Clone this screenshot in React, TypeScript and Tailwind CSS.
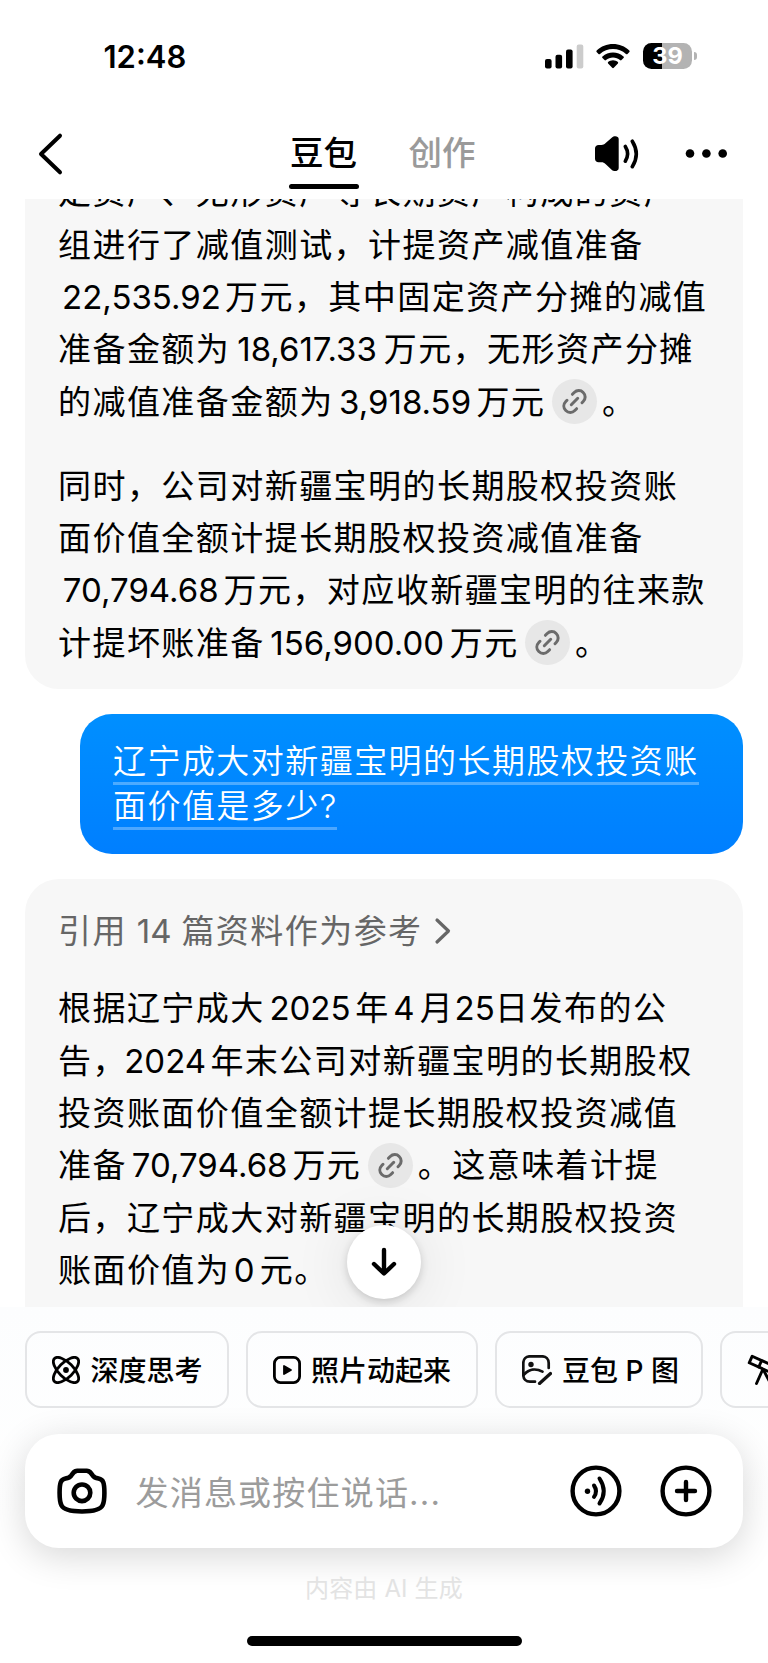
import type { ReactNode } from "react";

function Num({ children, className }: { children: ReactNode; className: string }) {
  return <span className={`inline-block text-center ${className}`}>{children}</span>;
}

function Line({ children }: { children: ReactNode }) {
  return <div className="flex h-[52.3px] items-center whitespace-nowrap">{children}</div>;
}

function LinkBadge() {
  return (
    <span className="-mt-[2px] mr-[5px] ml-[6.5px] flex size-[45px] items-center justify-center rounded-full bg-[#e7e7e7]">
      <svg width="25" height="25" viewBox="0 0 25 25" fill="none" stroke="#6b6b6b" strokeWidth="3" strokeLinecap="round">
        <path d="M9.3 15.700l6.400-6.400" />
        <path d="M10.400 5.300l1.800-1.800c2.600-2.600 6.600-2.600 9 0c2.600 2.600 2.600 6.400 0 9l-1.200 1.200" />
        <path d="M5 11.300l-1.200 1.200c-2.600 2.600-2.600 6.400 0 9c2.600 2.600 6.400 2.600 9 0l1.800-1.800" />
      </svg>
    </span>
  );
}

function StatusBar() {
  return (
    <div className="flex h-[108px] items-start">
      <div className="ml-[103.5px] mt-[41px] w-[84px] text-[31px] font-semibold leading-[32px]">12:48</div>
      <div className="ml-[357.5px] mt-[43px] flex">
        <svg width="39" height="27" viewBox="0 0 39 27">
          <rect x="0" y="16" width="6.6" height="9.4" rx="2" />
          <rect x="10.5" y="11.7" width="6.6" height="13.7" rx="2" />
          <rect x="21" y="6.5" width="6.6" height="18.9" rx="2" />
          <rect x="31.7" y="1.5" width="6.6" height="23.9" rx="2" fill="#cccccc" />
        </svg>
        <svg className="ml-[12px]" width="34" height="27" viewBox="0 0 34 27">
          <path d="M17 1c6.200 0 11.900 2.400 16.300 6.400c.5.5.5 1.100.1 1.600l-1.900 2c-.4.4-1 .4-1.500 0C26.400 7.800 21.900 6 17 6S7.600 7.800 4 11c-.5.4-1.100.4-1.500 0L.6 9c-.4-.5-.4-1.100.1-1.600C5.100 3.400 10.800 1 17 1z" />
          <path d="M17 9.400c4 0 7.700 1.500 10.500 4.100c.5.4.5 1.100 0 1.500l-2 2.100c-.4.4-1 .4-1.500 0c-1.900-1.700-4.300-2.700-7-2.700s-5.100 1-7 2.700c-.5.4-1.100.4-1.500 0l-2-2.100c-.5-.4-.5-1.100 0-1.500C9.300 10.900 13 9.400 17 9.400z" />
          <path d="M17 17.200c1.900 0 3.600.7 4.900 1.800c.4.4.4 1 0 1.400l-4.100 4.400c-.5.5-1.100.5-1.600 0l-4.100-4.400c-.4-.4-.4-1 0-1.400c1.300-1.100 3-1.800 4.900-1.800z" />
        </svg>
        <div className="ml-[13px] flex h-[26px] w-[49px] items-center justify-center rounded-[8.5px] bg-linear-to-r from-black from-[39%] to-[#b3b3b3] to-[39%] text-[23.5px] font-bold leading-none text-white">
          39
        </div>
        <div className="ml-[1.5px] mt-[9px] h-[8px] w-[3px] rounded-r-full bg-[#b3b3b3]" />
      </div>
    </div>
  );
}

function NavBar() {
  return (
    <div className="flex h-[91px] items-start text-[33.5px] font-medium leading-[40px]">
      <svg className="ml-[36px] mt-[24px]" width="30" height="44" viewBox="0 0 30 44" fill="none" stroke="#000" strokeWidth="4" strokeLinecap="round" strokeLinejoin="round">
        <path d="M24 3.700L5 22l19 18.300" />
      </svg>
      <div className="ml-[222.5px] mt-[25px] flex w-[71px] flex-col items-center">
        <span className="-ml-[1px] whitespace-nowrap">豆包</span>
        <span className="mt-[11px] h-[4.5px] w-[70px] rounded-full bg-black" />
      </div>
      <span className="ml-[49px] mt-[25px] whitespace-nowrap text-[#9a9a9a]">创作</span>
      <svg className="ml-[117px] mt-[27px]" width="46" height="38" viewBox="0 0 46 38">
        <path d="M2 13.500c0-2.200 1.500-3.600 3.600-3.600h2.900c1.600 0 2.800-.6 3.900-1.700L19 2.400c1.800-1.800 6.700-1.800 6.700 1.600v29c0 3.600-4.900 3.800-6.800 2l-6.400-6c-1.200-1.100-2.400-1.700-4-1.700H5.600c-2.100 0-3.600-1.400-3.600-3.600z" />
        <g fill="none" stroke="#000" strokeWidth="3.600" strokeLinecap="round">
          <path d="M32.300 11.500q4.600 7.200 0 14.700" />
          <path d="M39.300 6.200q8 12.800 0 25.500" />
        </g>
      </svg>
      <svg className="ml-[46.5px] mt-[40px]" width="42" height="12" viewBox="0 0 42 12">
        <circle cx="5" cy="5.500" r="4.300" />
        <circle cx="21.400" cy="5.500" r="4.300" />
        <circle cx="37.700" cy="5.500" r="4.300" />
      </svg>
    </div>
  );
}

function Chip({ icon, label, className }: { icon: ReactNode; label: string; className: string }) {
  return (
    <div className={`flex h-[77px] shrink-0 items-center gap-[10.5px] rounded-[16px] border-2 border-[#e4e5e7] pl-[25px] text-[28px] font-medium whitespace-nowrap ${className}`}>
      {icon}
      <span className="mt-[2px]">{label}</span>
    </div>
  );
}

const atomIcon = (
  <svg width="28" height="28" viewBox="0 0 28 28" fill="none" stroke="#000" strokeWidth="2.800">
    <ellipse cx="14" cy="14" rx="16.300" ry="7.300" transform="rotate(45 14 14)" />
    <ellipse cx="14" cy="14" rx="16.300" ry="7.300" transform="rotate(-45 14 14)" />
    <circle cx="14" cy="14" r="2.900" fill="#000" stroke="none" />
  </svg>
);

const playIcon = (
  <svg width="28" height="28" viewBox="0 0 28 28" fill="none" stroke="#000" strokeWidth="2.800">
    <rect x="1.400" y="1.400" width="25.200" height="25.200" rx="6" />
    <path d="M11 10v8l7-4z" fill="#000" strokeWidth="1.800" strokeLinejoin="round" />
  </svg>
);

const pictureIcon = (
  <svg width="30" height="30" viewBox="0 0 30 30" fill="none" stroke="#111" strokeWidth="2.700" strokeLinecap="round">
    <path d="M26.700 13V8c0-4-2.700-6.700-6.700-6.700H8c-4 0-6.700 2.700-6.700 6.700v12c0 4 2.700 6.700 6.700 6.700h5" />
    <path d="M2 19.500c5-5.500 12-6.500 18.500-2.800" />
    <circle cx="9" cy="9.500" r="2.700" fill="#111" stroke="none" />
    <path d="M17.500 28.500l11-10" strokeWidth="3.200" />
  </svg>
);

const telescopeIcon = (
  <svg width="32" height="32" viewBox="0 0 32 32" fill="none" stroke="#000" strokeWidth="2.900" strokeLinecap="round" strokeLinejoin="round">
    <path d="M5.200 2.200l24 11-2.700 6.500L2.200 8.800z" />
    <path d="M14.500 6.700l-2.700 6.300M15.500 16l-6 13.500M16.500 16l7 13.500" />
  </svg>
);

export default function App() {
  return (
    <div className="flex h-[1663px] w-[768px] flex-col overflow-hidden bg-white font-['Inter','Noto_Sans_CJK_SC',sans-serif] text-black">
      <StatusBar />
      <NavBar />

      {/* Conversation */}
      <div className="relative h-[1107.5px] overflow-hidden px-[25px] text-[33px] tracking-[1.45px]">
        <div className="-mt-[60px] h-[550px] rounded-[34px] bg-[#f7f7f7] px-[33px] pt-[28px]">
          <Line>定资产、无形资产等长期资产构成的资产</Line>
          <Line>组进行了减值测试，计提资产减值准备</Line>
          <Line><Num className="w-[167px] tracking-[0px]">22,535.92</Num>万元，其中固定资产分摊的减值</Line>
          <Line>准备金额为<Num className="w-[153.5px] tracking-[0px]">18,617.33</Num>万元，无形资产分摊</Line>
          <Line>的减值准备金额为<Num className="w-[143px] tracking-[0px]">3,918.59</Num>万元<LinkBadge />。</Line>
          <div className="mt-[32px]">
            <Line>同时，公司对新疆宝明的长期股权投资账</Line>
            <Line>面价值全额计提长期股权投资减值准备</Line>
            <Line><Num className="w-[165.5px] tracking-[0px]">70,794.68</Num>万元，对应收新疆宝明的往来款</Line>
            <Line>计提坏账准备<Num className="w-[185px] tracking-[0px]">156,900.00</Num>万元<LinkBadge />。</Line>
          </div>
        </div>

        <div className="ml-[55px] mt-[25px] h-[140px] rounded-[32px] bg-linear-to-b from-[#008fff] to-[#007fff] pl-[33px] pt-[23px] leading-[49px] text-white">
          <div className="h-[45px] font-[350]"><span className="inline-block h-[48px] w-[586px] whitespace-nowrap border-b-[3px] border-white/30">辽宁成大对新疆宝明的长期股权投资账</span></div>
          <div className="h-[45px] font-[350]"><span className="inline-block h-[48px] w-[224px] whitespace-nowrap border-b-[3px] border-white/30">面价值是多少?</span></div>
        </div>

        <div className="mt-[25px] h-[500px] rounded-t-[34px] bg-[#f7f7f7] px-[33px] pt-[27px]">
          <div className="flex h-[52px] items-center whitespace-nowrap text-[#666]">
            引用<Num className="w-[54.5px] tracking-[0px]">14</Num>篇资料作为参考
            <svg className="ml-[11px] -mt-[2px]" width="18" height="28" viewBox="0 0 18 28" fill="none" stroke="#666" strokeWidth="3.200" strokeLinecap="round" strokeLinejoin="round">
              <path d="M3 3l11.500 11L3 25" />
            </svg>
          </div>
          <div className="mt-[25px]">
            <Line>根据辽宁成大<Num className="w-[90.5px] tracking-[0px]">2025</Num>年<Num className="w-[30px]">4</Num>月<Num className="w-[41px] tracking-[0px]">25</Num>日发布的公</Line>
            <Line>告，<Num className="-ml-[7px] w-[90.5px] tracking-[0px]">2024</Num>年末公司对新疆宝明的长期股权</Line>
            <Line>投资账面价值全额计提长期股权投资减值</Line>
            <Line>准备<Num className="w-[165.5px] tracking-[0px]">70,794.68</Num>万元<LinkBadge />。这意味着计提</Line>
            <Line>后，辽宁成大对新疆宝明的长期股权投资</Line>
            <Line>账面价值为<Num className="w-[29.5px]">0</Num>元。</Line>
          </div>
        </div>

        {/* Scroll to latest */}
        <button className="absolute left-[347px] top-[1025.5px] flex size-[74px] items-center justify-center rounded-full bg-white shadow-[0_3px_8px_rgba(0,0,0,0.16),0_4px_60px_rgba(0,0,0,0.10)]">
          <svg width="28" height="32" viewBox="0 0 28 32" fill="none" stroke="#000" strokeWidth="4.400" strokeLinecap="round" strokeLinejoin="round">
            <path d="M14 4v23M4 18l10 9.500L24 18" />
          </svg>
        </button>
      </div>

      {/* Composer */}
      <div className="flex h-[356.5px] flex-col overflow-hidden bg-linear-to-b from-[#fcfdfe] to-white to-60% pt-[24.5px]">
        <div className="flex gap-[17px] pl-[25px]">
          <Chip className="w-[203.5px]" icon={atomIcon} label="深度思考" />
          <Chip className="w-[232px]" icon={playIcon} label="照片动起来" />
          <Chip className="w-[208px]" icon={pictureIcon} label="豆包 P 图" />
          <Chip className="w-[240px] pl-[22.5px]" icon={telescopeIcon} label="深入研究" />
        </div>
        <div className="mx-[25px] mt-[25.5px] flex h-[114px] shrink-0 items-center rounded-[34px] bg-white pl-[32px] pr-[31px] shadow-[0_8px_36px_rgba(0,0,0,0.16)]">
          <svg width="50" height="48" viewBox="0 0 50 48" fill="none" stroke="#000" strokeWidth="4.600" strokeLinejoin="round">
            <path d="M2.600 26c0-5 .2-8.500 1.200-10.900c.9-2.100 2.400-3 4.700-3.500c3-.6 4.400-1.200 5.900-3.300C16.400 5.300 17.300 4 20.200 3.800h9.600c2.900.2 3.800 1.500 5.800 4.500c1.500 2.100 2.900 2.700 5.900 3.300c2.300.5 3.800 1.400 4.700 3.500c1 2.400 1.200 5.900 1.200 10.900c0 6-.4 9.500-1.800 12.300c-2 4-7.600 6.200-20.600 6.200s-18.600-2.200-20.600-6.200C3 35.500 2.600 32 2.600 26z" />
            <circle cx="25" cy="25.800" r="8.300" />
          </svg>
          <span className="ml-[28.5px] mt-[6px] flex-1 whitespace-nowrap text-[33px] tracking-[1.2px] text-[#9c9c9c]">发消息或按住说话...</span>
          <svg width="52" height="52" viewBox="0 0 52 52" fill="none" stroke="#000" strokeWidth="4.400" strokeLinecap="round">
            <circle cx="26" cy="26" r="23.400" />
            <circle cx="17.500" cy="26.300" r="2.700" fill="#000" stroke="none" />
            <path d="M24 20.500q4 5.800 0 11.400M29.500 13.500q8.500 12.700 0 25" strokeWidth="4" />
          </svg>
          <svg className="ml-[38px]" width="52" height="52" viewBox="0 0 52 52" fill="none" stroke="#000" strokeWidth="4.400" strokeLinecap="round">
            <circle cx="26" cy="26" r="23.400" />
            <path d="M26 17v18M17 26h18" />
          </svg>
        </div>
        <div className="mt-[25px] text-center text-[24px] leading-[32px] tracking-[0.15px] text-[#e3e3e3]">内容由 AI 生成</div>
        <div className="mx-auto mt-[31px] h-[10.5px] w-[275px] shrink-0 rounded-full bg-black" />
      </div>
    </div>
  );
}
